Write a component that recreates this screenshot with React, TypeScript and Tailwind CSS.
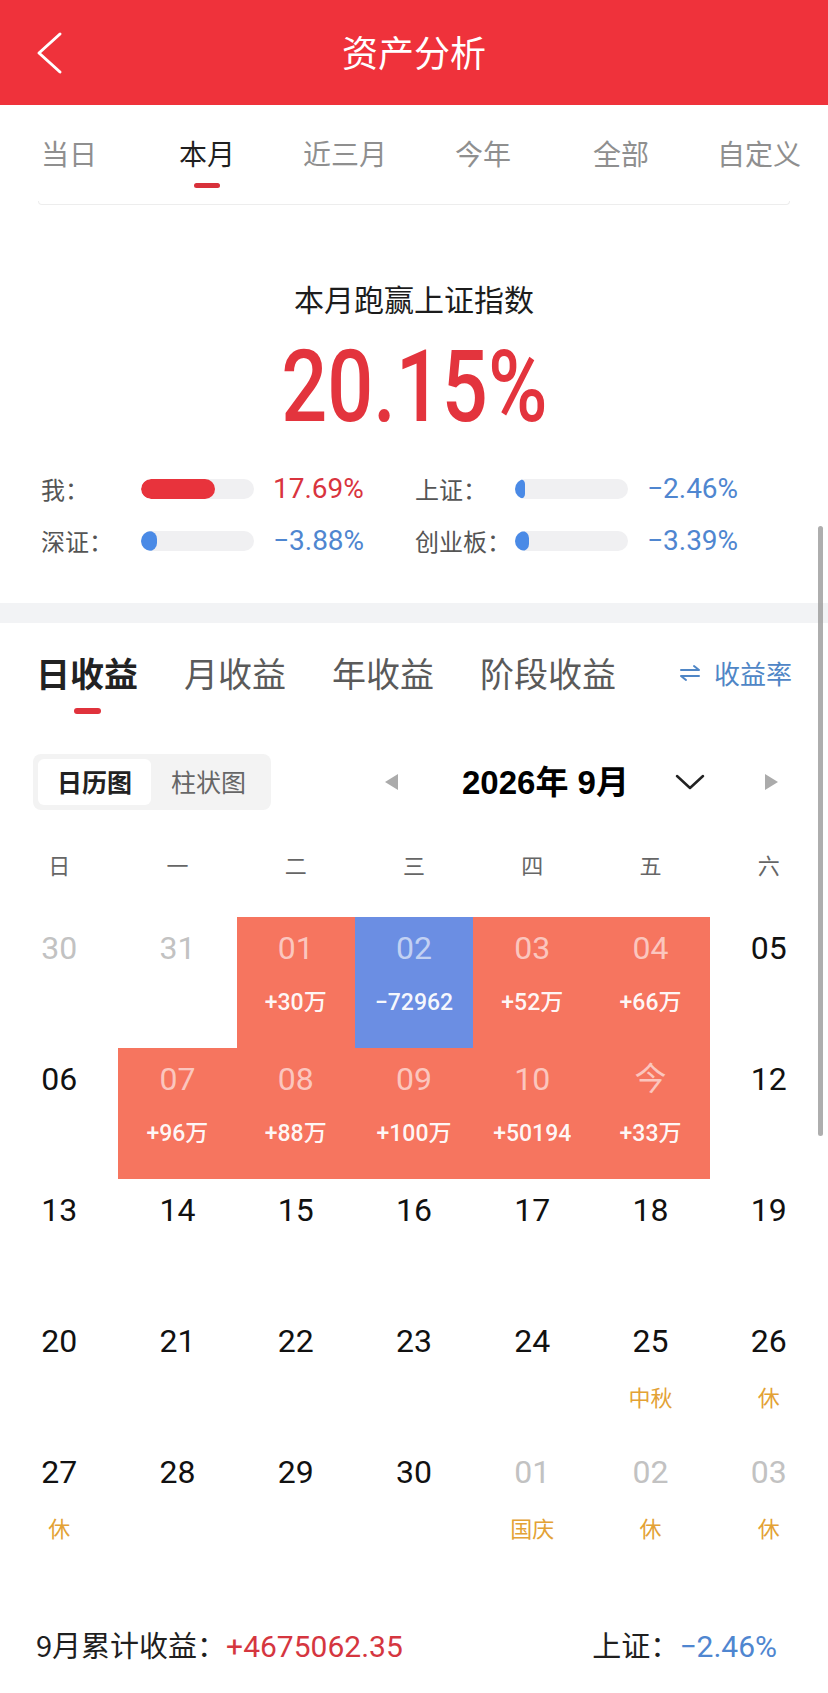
type Day = {
  d: string;
  v?: string;
  tone?: "up" | "down";
  muted?: boolean;
  tag?: string;
};

const periods = ["当日", "本月", "近三月", "今年", "全部", "自定义"];
const weekdays = ["日", "一", "二", "三", "四", "五", "六"];

const weeks: Day[][] = [
  [
    { d: "30", muted: true },
    { d: "31", muted: true },
    { d: "01", v: "+30万", tone: "up" },
    { d: "02", v: "−72962", tone: "down" },
    { d: "03", v: "+52万", tone: "up" },
    { d: "04", v: "+66万", tone: "up" },
    { d: "05" },
  ],
  [
    { d: "06" },
    { d: "07", v: "+96万", tone: "up" },
    { d: "08", v: "+88万", tone: "up" },
    { d: "09", v: "+100万", tone: "up" },
    { d: "10", v: "+50194", tone: "up" },
    { d: "今", v: "+33万", tone: "up" },
    { d: "12" },
  ],
  [{ d: "13" }, { d: "14" }, { d: "15" }, { d: "16" }, { d: "17" }, { d: "18" }, { d: "19" }],
  [
    { d: "20" },
    { d: "21" },
    { d: "22" },
    { d: "23" },
    { d: "24" },
    { d: "25", tag: "中秋" },
    { d: "26", tag: "休" },
  ],
  [
    { d: "27", tag: "休" },
    { d: "28" },
    { d: "29" },
    { d: "30" },
    { d: "01", muted: true, tag: "国庆" },
    { d: "02", muted: true, tag: "休" },
    { d: "03", muted: true, tag: "休" },
  ],
];

const compare = [
  { label: "我：", fill: 74, color: "bg-[#e8333c]", value: "17.69%", text: "text-[#d9343e]" },
  { label: "上证：", fill: 10, color: "bg-[#4a8ae6]", value: "−2.46%", text: "text-[#4f86d0]" },
  { label: "深证：", fill: 16, color: "bg-[#4a8ae6]", value: "−3.88%", text: "text-[#4f86d0]" },
  { label: "创业板：", fill: 14, color: "bg-[#4a8ae6]", value: "−3.39%", text: "text-[#4f86d0]" },
];

function DayCell({ day }: { day: Day }) {
  const bg =
    day.tone === "up" ? "bg-[#f6755f]" : day.tone === "down" ? "bg-[#6b8ee3]" : "";
  const numColor = day.tone
    ? "text-white/60"
    : day.muted
      ? "text-[#c2c2c2]"
      : "text-[#111111]";

  return (
    <div className={`h-[131px] flex flex-col items-center pt-[13px] ${bg}`}>
      <span className={`text-[32px] leading-[36px] font-['Roboto','Noto_Sans_CJK_SC',sans-serif] ${numColor}`}>
        {day.d}
      </span>
      {day.v && (
        <span className="mt-[23px] text-[23px] leading-[28px] font-medium text-white/95 font-['Roboto','Noto_Sans_CJK_SC',sans-serif]">
          {day.v}
        </span>
      )}
      {day.tag && (
        <span className="mt-[23px] text-[22px] leading-[28px] text-[#e3a235]">{day.tag}</span>
      )}
    </div>
  );
}

export default function App() {
  return (
    <div className="relative w-[828px] min-h-[1693px] bg-white font-['Noto_Sans_CJK_SC',sans-serif] overflow-hidden">
      {/* Top bar */}
      <div className="relative h-[105px] bg-[#ef323b] flex items-center justify-center">
        <svg
          className="absolute left-[34px] top-[30px]"
          width="32"
          height="46"
          viewBox="0 0 32 46"
          fill="none"
          stroke="white"
          strokeWidth="3"
          strokeLinecap="round"
          strokeLinejoin="round"
        >
          <polyline points="26,4 5,23 26,42" />
        </svg>
        <span className="text-white text-[36px] leading-none -mt-[4px]">资产分析</span>
      </div>

      {/* Period tabs */}
      <div className="grid grid-cols-6 h-[96px]">
        {periods.map((p) => (
          <div key={p} className="flex flex-col items-center pt-[30px]">
            <span
              className={`text-[28px] leading-[36px] ${
                p === "本月" ? "text-[#1f1f1f]" : "text-[#8f8f8f]"
              }`}
            >
              {p}
            </span>
            {p === "本月" && <span className="mt-[12px] w-[26px] h-[5px] rounded-full bg-[#d8313b]" />}
          </div>
        ))}
      </div>
      <div className="mx-[38px] h-[4px] border-b border-x border-[#ededed] rounded-b-[14px]" />

      {/* Beat index */}
      <div className="flex flex-col items-center pt-[73px]">
        <span className="text-[30px] leading-[40px] text-[#1c1c1c]">本月跑赢上证指数</span>
        <span className="mt-[19px] inline-block scale-x-[0.81] text-[100px] leading-[100px] font-medium text-[#e3343d] font-['Roboto',sans-serif]">
          20.15%
        </span>
      </div>

      <div className="grid grid-cols-[374px_374px] gap-y-[16px] px-[41px] mt-[34px] pb-[44px]">
        {compare.map((c) => (
          <div key={c.label} className="flex items-center h-[36px]">
            <span className="w-[100px] text-[24px] leading-none text-[#555555]">{c.label}</span>
            <span className="w-[113px] h-[20px] rounded-full bg-[#f0f0f2] overflow-hidden">
              <span className={`block h-full rounded-full ${c.color}`} style={{ width: c.fill }} />
            </span>
            <span
              className={`ml-[19px] text-[28px] leading-none font-['Roboto',sans-serif] ${c.text}`}
            >
              {c.value}
            </span>
          </div>
        ))}
      </div>

      <div className="h-[20px] bg-[#f2f3f5]" />

      {/* Income tabs */}
      <div className="flex items-start px-[36px] pt-[28px]">
        <div className="flex flex-col items-center">
          <span className="text-[34px] leading-[44px] font-bold text-[#222222]">日收益</span>
          <span className="mt-[13px] w-[27px] h-[6px] rounded-full bg-[#e0323c]" />
        </div>
        <span className="ml-[46px] text-[34px] leading-[44px] text-[#5a5a5a]">月收益</span>
        <span className="ml-[46px] text-[34px] leading-[44px] text-[#5a5a5a]">年收益</span>
        <span className="ml-[46px] text-[34px] leading-[44px] text-[#5a5a5a]">阶段收益</span>
        <div className="ml-auto flex items-center h-[44px] text-[#4f86c6]">
          <svg width="24" height="24" viewBox="0 0 24 24" fill="none" stroke="currentColor" strokeWidth="2" strokeLinecap="round" strokeLinejoin="round">
            <path d="M3 9h18l-5-4" />
            <path d="M21 15H3l5 4" />
          </svg>
          <span className="ml-[12px] text-[26px] leading-none">收益率</span>
        </div>
      </div>

      {/* View toggle + month */}
      <div className="flex items-center px-[33px] mt-[40px]">
        <div className="flex items-center h-[56px] w-[238px] p-[5px] rounded-[8px] bg-[#f3f3f3]">
          <span className="w-[113px] h-[46px] flex items-center justify-center rounded-[6px] bg-white text-[25px] font-bold text-[#222222]">
            日历图
          </span>
          <span className="flex-1 text-center text-[25px] text-[#666666]">柱状图</span>
        </div>
        <svg className="ml-[114px]" width="13" height="16" viewBox="0 0 13 16">
          <polygon points="13,0 13,16 0,8" fill="#ababab" />
        </svg>
        <span className="ml-[64px] w-[170px] text-[33px] leading-none font-bold text-black font-['Liberation_Sans','Noto_Sans_CJK_SC',sans-serif] whitespace-nowrap">
          2026年 9月
        </span>
        <svg className="ml-[43px]" width="30" height="20" viewBox="0 0 30 20" fill="none" stroke="#222222" strokeWidth="2.5" strokeLinecap="round" strokeLinejoin="round">
          <polyline points="2,4 15,16 28,4" />
        </svg>
        <svg className="ml-[60px]" width="13" height="16" viewBox="0 0 13 16">
          <polygon points="0,0 0,16 13,8" fill="#ababab" />
        </svg>
      </div>

      {/* Calendar */}
      <div className="grid grid-cols-7 mt-[39px]">
        {weekdays.map((w) => (
          <span key={w} className="text-center text-[22px] leading-[30px] text-[#666666]">
            {w}
          </span>
        ))}
      </div>
      <div className="grid grid-cols-7 mt-[38px]">
        {weeks.flat().map((day, i) => (
          <DayCell key={i} day={day} />
        ))}
      </div>

      {/* Summary */}
      <div className="flex items-center justify-between pl-[36px] pr-[51px] mt-[56px] pb-[27px] h-[36px] box-content">
        <span className="text-[29px] leading-none text-[#1f1f1f]">
          9月累计收益：
          <span className="text-[30px] text-[#d5363f] font-['Roboto',sans-serif]">+4675062.35</span>
        </span>
        <span className="text-[29px] leading-none text-[#1f1f1f]">
          上证：
          <span className="text-[30px] text-[#4f86d0] font-['Roboto',sans-serif]">−2.46%</span>
        </span>
      </div>

      {/* Scroll indicator */}
      <div className="absolute right-[5px] top-[526px] w-[5px] h-[610px] rounded-full bg-[#9a9a9a]/80" />
    </div>
  );
}
